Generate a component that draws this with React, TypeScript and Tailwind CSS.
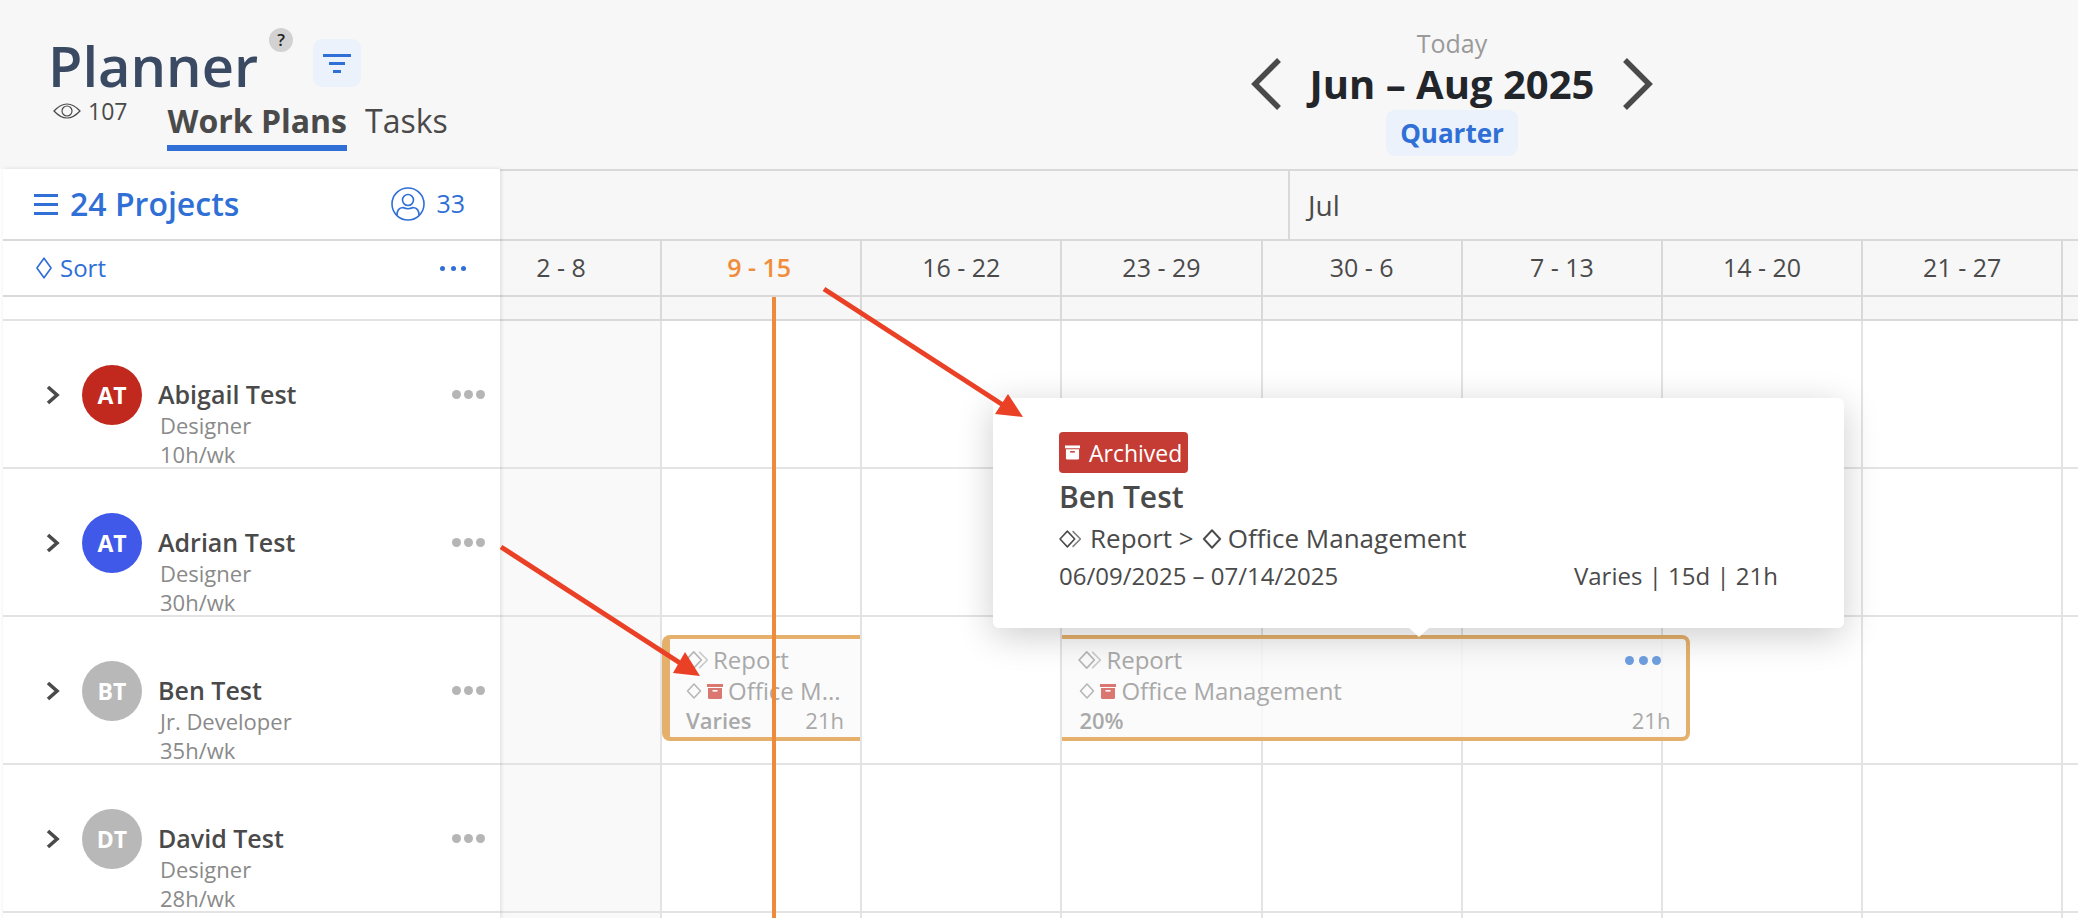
const weeks = ["2 - 8", "9 - 15", "16 - 22", "23 - 29", "30 - 6", "7 - 13", "14 - 20", "21 - 27", ""];

const people = [
  { initials: "AT", name: "Abigail Test", role: "Designer", hours: "10h/wk", color: "bg-[#c1291e]" },
  { initials: "AT", name: "Adrian Test", role: "Designer", hours: "30h/wk", color: "bg-[#4159e8]" },
  { initials: "BT", name: "Ben Test", role: "Jr. Developer", hours: "35h/wk", color: "bg-[#b9b8b8]" },
  { initials: "DT", name: "David Test", role: "Designer", hours: "28h/wk", color: "bg-[#b9b8b8]" },
];

const Diamond = ({ className = "" }: { className?: string }) => (
  <svg viewBox="0 0 16 22" className={className} fill="none" stroke="currentColor" strokeWidth="1.5">
    <path d="M8 2 L14.5 11 L8 20 L1.5 11 Z" strokeLinejoin="round" />
  </svg>
);

const SmallDiamond = ({ className = "" }: { className?: string }) => (
  <svg viewBox="0 0 16 16" className={className} fill="none" stroke="currentColor" strokeWidth="1.5">
    <path d="M8 1 L14.5 8 L8 15 L1.5 8 Z" strokeLinejoin="round" />
  </svg>
);

const DoubleDiamond = ({ className = "" }: { className?: string }) => (
  <svg viewBox="0 0 22 18" className={className} fill="none" stroke="currentColor" strokeWidth="1.5">
    <path d="M8 1.5 L15 9 L8 16.5 L1 9 Z" strokeLinejoin="round" />
    <path d="M13 1.5 L20.5 9 L13 16.5" strokeOpacity="0.7" strokeLinejoin="round" />
  </svg>
);

const ArchiveBox = ({ className = "", slot = "#ffffff" }: { className?: string; slot?: string }) => (
  <svg viewBox="0 0 16 15" className={className}>
    <rect x="0" y="0" width="16" height="3" fill="currentColor" />
    <path d="M1 4 H15 V13.5 Q15 15 13.5 15 H2.5 Q1 15 1 13.5 Z" fill="currentColor" />
    <rect x="5.5" y="6" width="5" height="1.6" fill={slot} />
  </svg>
);

const Dots = ({ className = "" }: { className?: string }) => (
  <div className={`flex items-center justify-between ${className}`}>
    <span className="h-full aspect-square rounded-full bg-current" />
    <span className="h-full aspect-square rounded-full bg-current" />
    <span className="h-full aspect-square rounded-full bg-current" />
  </div>
);

const Header = () => (
  <div className="flex h-[169px] bg-[#f7f7f7]">
    <div className="w-[500px] shrink-0 pl-[48px]">
      <div className="flex items-start pt-[28px]">
        <h1 className="mt-[5px] text-[56px] leading-[64px] font-semibold text-[#3b4a63]">Planner</h1>
        <div className="ml-[11px] flex h-[24px] w-[24px] items-center justify-center rounded-full bg-[#d2d2d2] text-[17px] font-semibold text-[#222]">
          ?
        </div>
        <div className="ml-[20px] mt-[11px] flex h-[48px] w-[48px] flex-col items-center justify-center gap-[5px] rounded-[9px] bg-[#ebf2fc]">
          <span className="h-[3px] w-[28px] bg-[#2f6fd6]" />
          <span className="h-[3px] w-[16px] bg-[#2f6fd6]" />
          <span className="h-[3px] w-[8px] bg-[#2f6fd6]" />
        </div>
      </div>
      <div className="flex items-start">
        <div className="-mt-[1px] flex items-center pl-[5px] text-[#4a4a4a]">
          <svg viewBox="0 0 28 18" className="h-[18px] w-[28px]" fill="none" stroke="currentColor" strokeWidth="1.2">
            <path d="M1 9 Q14 -5 27 9 Q14 23 1 9 Z" />
            <circle cx="14" cy="9" r="5" />
          </svg>
          <span className="ml-[7px] text-[23px] leading-[30px]">107</span>
        </div>
        <div className="ml-[40px] mt-[3px] border-b-[6px] border-[#2f6fd6] pb-[3px] text-[32px] leading-[42px] font-bold text-[#4a4a4a]">
          Work Plans
        </div>
        <div className="ml-[18px] mt-[3px] text-[32px] leading-[42px] text-[#4a4a4a]">Tasks</div>
      </div>
    </div>
    <div className="ml-[702px] flex w-[500px] shrink-0 flex-col items-center pt-[28px]">
      <div className="text-[25px] leading-[30px] text-[#9a9a9a]">Today</div>
      <div className="flex items-center whitespace-nowrap">
        <svg viewBox="0 0 30 52" className="h-[52px] w-[30px]" fill="none" stroke="#4a4a4a" strokeWidth="5.5">
          <path d="M28 2 L4 26 L28 50" />
        </svg>
        <div className="mx-[29px] text-[40px] leading-[50px] font-bold text-[#22262b]">Jun – Aug 2025</div>
        <svg viewBox="0 0 30 52" className="h-[52px] w-[30px]" fill="none" stroke="#4a4a4a" strokeWidth="5.5">
          <path d="M2 2 L26 26 L2 50" />
        </svg>
      </div>
      <div className="rounded-[9px] bg-[#ebf2fc] px-[14px] text-[26px] leading-[46px] font-bold text-[#2f6fd6]">
        Quarter
      </div>
    </div>
  </div>
);

const Sidebar = () => (
  <div className="relative z-10 ml-[3px] w-[497px] shrink-0 bg-white shadow-[1px_0_4px_rgba(0,0,0,0.12)]">
    <div className="flex h-[72px] items-center border-b-2 border-[#d9d9d9] pl-[31px] pr-[35px] text-[#2f6fd6]">
      <div className="flex w-[24px] flex-col gap-[6px]">
        <span className="h-[3px] w-full bg-[#2f6fd6]" />
        <span className="h-[3px] w-full bg-[#2f6fd6]" />
        <span className="h-[3px] w-full bg-[#2f6fd6]" />
      </div>
      <span className="ml-[12px] text-[32px] font-semibold">24 Projects</span>
      <svg viewBox="0 0 34 34" className="ml-auto h-[34px] w-[34px]" fill="none" stroke="currentColor" strokeWidth="1.6">
        <circle cx="17" cy="17" r="16" />
        <circle cx="17" cy="13" r="5.5" />
        <path d="M6 28 Q6 21 12 20.5 Q17 23 22 20.5 Q28 21 28 28" />
      </svg>
      <span className="ml-[11px] text-[25px]">33</span>
    </div>
    <div className="flex h-[56px] items-center border-b-2 border-[#d9d9d9] pl-[32px] pr-[34px] text-[#2f6fd6]">
      <Diamond className="h-[24px] w-[18px]" />
      <span className="ml-[7px] text-[24px]">Sort</span>
      <Dots className="ml-auto h-[5px] w-[26px]" />
    </div>
    <div className="h-[24px] border-b-2 border-[#e3e3e3]" />
    {people.map((p) => (
      <div key={p.name} className="flex h-[148px] items-start border-b-2 border-[#e3e3e3] pl-[43px] pr-[15px] pt-[44px]">
        <svg viewBox="0 0 14 20" className="mt-[20px] h-[20px] w-[14px]" fill="none" stroke="#4a4a4a" strokeWidth="3.6">
          <path d="M2 2 L11 10 L2 18" />
        </svg>
        <div className={`ml-[22px] flex h-[60px] w-[60px] items-center justify-center rounded-full text-[23px] font-bold text-white ${p.color}`}>
          {p.initials}
        </div>
        <div className="ml-[16px] mt-[13px]">
          <div className="text-[25px] leading-[33px] font-semibold text-[#4a4a4a]">{p.name}</div>
          <div className="pl-[2px] text-[22px] leading-[29px] text-[#8a8a8a]">{p.role}</div>
          <div className="pl-[2px] text-[22px] leading-[29px] text-[#8a8a8a]">{p.hours}</div>
        </div>
        <Dots className="ml-auto mt-[25px] h-[9px] w-[33px] text-[#b5b5b5]" />
      </div>
    ))}
    <div className="h-[148px]" />
  </div>
);

const Bar = ({
  className,
  title,
  label,
  hours,
  bold,
  dots,
}: {
  className: string;
  title: string;
  label: string;
  hours: string;
  bold: string;
  dots?: boolean;
}) => (
  <div className={`relative flex h-[106px] flex-col border-y-4 border-[#e5b06c] bg-[#fafafa]/80 pt-[5px] text-[#a9a9a9] ${className}`}>
    <div className="flex h-[32px] items-center gap-[4px]">
      <DoubleDiamond className="-ml-[1px] h-[20px] w-[24px] text-[#b5b5b5]" />
      <span className="text-[24px] leading-[32px]">{title}</span>
      {dots && <Dots className="ml-auto mr-[25px] h-[9px] w-[36px] text-[#6f9fe0]" />}
    </div>
    <div className="flex h-[30px] items-center">
      <SmallDiamond className="h-[16px] w-[16px] text-[#b5b5b5]" />
      <ArchiveBox className="ml-[5px] h-[15px] w-[16px] text-[#d97770]" />
      <span className="ml-[5px] whitespace-nowrap text-[24px] leading-[30px]">{label}</span>
    </div>
    <div className="flex h-[28px] items-center justify-between pr-[16px] text-[22px]">
      <span className="font-semibold">{bold}</span>
      <span>{hours}</span>
    </div>
  </div>
);

const GridRow = ({ index }: { index: number }) => (
  <div className="grid h-[148px] grid-cols-[162px_repeat(8,200.2px)] border-b-2 border-[#e3e3e3]">
    {weeks.map((w, i) => (
      <div key={`${index}-${i}`} className={`border-r-2 border-[#e3e3e3] ${i === 0 ? "bg-[#f9f9f9]" : ""}`}>
        {index === 2 && i === 1 && (
          <div className="pt-[18px]">
            <Bar
              className="w-[198px] rounded-l-[8px] border-l-[8px] pl-[16px]"
              title="Report"
              label="Office M..."
              bold="Varies"
              hours="21h"
            />
          </div>
        )}
        {index === 2 && i === 3 && (
          <div className="pt-[18px]">
            <Bar
              className="z-[1] w-[628px] rounded-r-[8px] border-r-4 pl-[17px]"
              title="Report"
              label="Office Management"
              bold="20%"
              hours="21h"
              dots
            />
          </div>
        )}
      </div>
    ))}
  </div>
);

const Timeline = () => (
  <div className="min-w-0 flex-1">
    <div className="flex h-[72px] border-t-2 border-b-2 border-[#d9d9d9] bg-[#f7f7f7]">
      <div className="w-[790px] shrink-0 border-r-2 border-[#d9d9d9]" />
      <div className="pl-[18px] text-[28px] leading-[68px] text-[#4a4a4a]">Jul</div>
    </div>
    <div className="grid h-[56px] grid-cols-[162px_repeat(8,200.2px)] border-b-2 border-[#d9d9d9] bg-[#f7f7f7]">
      {weeks.map((w, i) => (
        <div
          key={i}
          className={`flex items-center justify-center border-r-2 border-[#d9d9d9] text-[25px] ${
            i === 0 ? "pr-[38px]" : ""
          } ${i === 1 ? "pr-[4px] font-semibold text-[#f08c3a]" : "text-[#4a4a4a]"}`}
        >
          {w}
        </div>
      ))}
    </div>
    <div className="grid h-[24px] grid-cols-[162px_repeat(8,200.2px)] border-b-2 border-[#d9d9d9] bg-[#f7f7f7]">
      {weeks.map((w, i) => (
        <div key={i} className="border-r-2 border-[#d9d9d9]" />
      ))}
    </div>
    {[0, 1, 2, 3, 4].map((r) => (
      <GridRow key={r} index={r} />
    ))}
  </div>
);

const Popover = () => (
  <div className="absolute left-[993px] top-[398px] z-20 h-[230px] w-[851px] rounded-[6px] bg-white pl-[66px] pr-[66px] pt-[34px] text-[#4a4a4a] shadow-[0_8px_36px_rgba(0,0,0,0.2)]">
    <div className="flex h-[41px] w-fit items-center rounded-[4px] bg-[#c43c33] px-[6px] text-white">
      <ArchiveBox className="h-[15px] w-[15px] text-white" slot="#c43c33" />
      <span className="ml-[9px] pt-[1px] text-[23px]">Archived</span>
    </div>
    <div className="pt-[1px] text-[30px] leading-[46px] font-semibold">Ben Test</div>
    <div className="flex h-[37px] items-center text-[26px]">
      <DoubleDiamond className="h-[20px] w-[23px]" />
      <span className="ml-[8px]">Report &gt;</span>
      <SmallDiamond className="ml-[8px] h-[20px] w-[20px]" />
      <span className="ml-[6px]">Office Management</span>
    </div>
    <div className="flex h-[38px] items-center justify-between text-[24px]">
      <span>06/09/2025 – 07/14/2025</span>
      <span>Varies | 15d | 21h</span>
    </div>
    <div className="absolute left-[416px] top-[230px] h-0 w-0 border-x-[10px] border-t-[9px] border-x-transparent border-t-white" />
  </div>
);

const Arrows = () => (
  <svg viewBox="0 0 2078 918" className="pointer-events-none absolute left-0 top-0 z-30 h-[918px] w-[2078px]">
    <path d="M824 289 L1003 405" stroke="#ea4126" strokeWidth="5" fill="none" />
    <path d="M1023 417 L1008 394 L995 414 Z" fill="#ea4126" />
    <path d="M501 547 L680 663" stroke="#ea4126" strokeWidth="5" fill="none" />
    <path d="M700 676 L685 652 L673 673 Z" fill="#ea4126" />
  </svg>
);

export default function App() {
  return (
    <div className="relative h-[918px] w-[2078px] overflow-hidden bg-[#ececec] font-['Open_Sans',sans-serif]">
      <Header />
      <div className="flex bg-white">
        <Sidebar />
        <Timeline />
      </div>
      <div className="absolute bottom-0 left-[772px] top-[297px] z-[15] w-[4px] bg-[#ee8a3c]" />
      <Popover />
      <Arrows />
    </div>
  );
}
